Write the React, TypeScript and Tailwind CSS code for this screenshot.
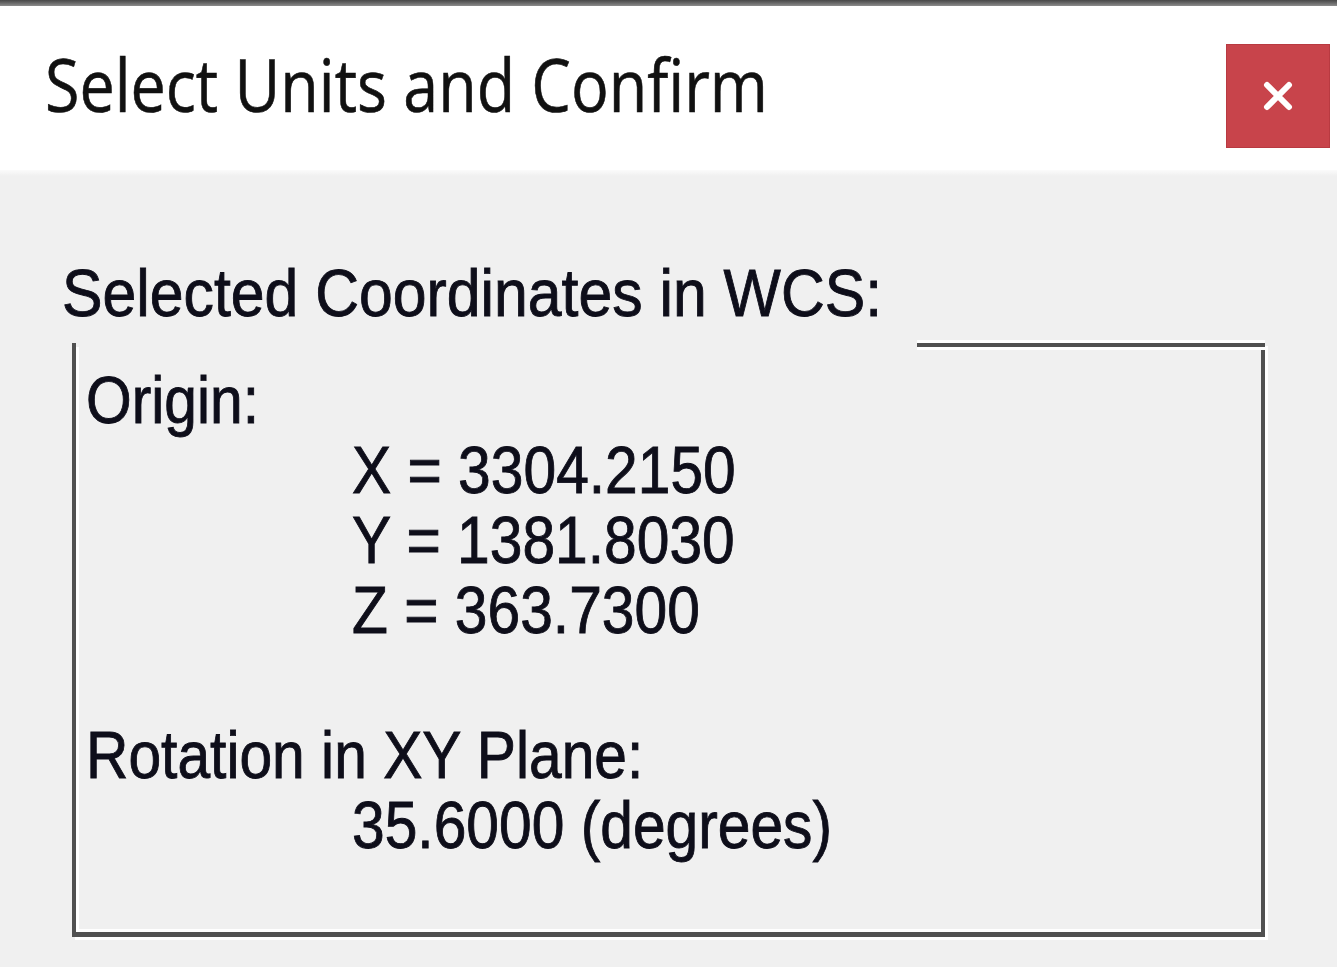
import React from "react";

const Line = ({
  children,
  className = "",
  wide = false,
}: {
  children: React.ReactNode;
  className?: string;
  wide?: boolean;
}) => (
  <div className={`h-[70px] leading-[70px] whitespace-nowrap ${className}`}>
    <span className={`inline-block origin-left ${wide ? "scale-x-[0.92]" : "scale-x-[0.89]"}`}>{children}</span>
  </div>
);

const App = () => {
  return (
    <div className="w-[1337px] h-[967px] overflow-hidden bg-[#f0f0f0] flex flex-col text-[#0e0e1a] font-['Liberation_Sans',Arial,sans-serif] text-[66px] [-webkit-text-stroke:0.9px_#0e0e1a]">
      {/* window top edge */}
      <div className="h-[6px] bg-gradient-to-b from-[#474747] to-[#8c8c8c]" />

      {/* Title bar */}
      <div className="h-[164px] bg-white flex items-start justify-between pl-[45px] pr-[7px] pt-[38px]">
        <div className="h-[80px] leading-[80px] text-[73px] font-medium font-['Open_Sans',sans-serif] text-[#111] whitespace-nowrap [-webkit-text-stroke:0.6px_#111]">
          <span className="inline-block origin-left scale-x-[0.86]">Select Units and Confirm</span>
        </div>
        <button className="w-[104px] h-[104px] bg-[#c8444b] border border-[#b83a41] flex items-center justify-center">
          <svg width="32" height="32" viewBox="0 0 32 32">
            <path d="M5 5 L27 27 M27 5 L5 27" stroke="#fff" strokeWidth="6" strokeLinecap="round" />
          </svg>
        </button>
      </div>
      <div className="h-[6px] bg-gradient-to-b from-[#fbfbfb] to-[#f0f0f0]" />

      {/* Body */}
      <div className="pl-[62px] pt-[82px]">
        <Line wide>Selected Coordinates in WCS:</Line>
      </div>

      <div className="ml-[72px] mt-[15px] w-[1193px] h-[594px] border-l-4 border-r-4 border-b-[5px] border-[#505050] shadow-[3px_3px_0_0_#ffffff] flex flex-col">
        <div className="flex h-[4px]">
          <div className="w-[841px]" />
          <div className="flex-1 -mr-[4px] bg-[#505050] shadow-[0_-3px_0_0_#ffffff,0_3px_0_0_#ffffff]" />
        </div>
        <div className="flex-1 pl-[7px] pt-[18px] border-l-[3px] border-b-[3px] border-white">
          <Line>Origin:</Line>
          <Line className="pl-[266px]">X = 3304.2150</Line>
          <Line className="pl-[266px]">Y = 1381.8030</Line>
          <Line className="pl-[266px]">Z = 363.7300</Line>
          <Line className="mt-[75px]">Rotation in XY Plane:</Line>
          <Line className="pl-[266px]">35.6000 (degrees)</Line>
        </div>
      </div>
    </div>
  );
};

export default App;
